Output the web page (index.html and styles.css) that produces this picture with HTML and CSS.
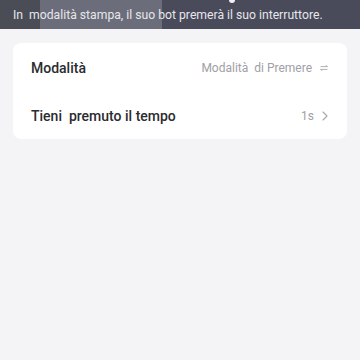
FILE: index.html
```html
<!DOCTYPE html>
<html>
<head>
<meta charset="utf-8">
<link rel="stylesheet" href="styles.css">
</head>
<body>
<div class="banner">
  <div class="seg seg-a"></div>
  <div class="seg seg-b"></div>
  <div class="seg seg-c"></div>
  <span class="dot"></span>
  <p class="banner-text">In&nbsp; modalità stampa, il suo bot premerà il suo interruttore.</p>
</div>
<div class="content">
  <div class="card">
    <div class="row">
      <span class="label">Modalità</span>
      <span class="value">Modalità&nbsp; di Premere
        <svg class="swap" width="8" height="6" viewBox="0 0 8 6"><path d="M0.5 1.6H7.5L5.6 0.2M7.5 4.4H0.5L2.4 5.8" stroke="#a8a8ae" stroke-width="0.9" fill="none" stroke-linejoin="round"/></svg>
      </span>
    </div>
    <div class="row">
      <span class="label">Tieni&nbsp; premuto il tempo</span>
      <span class="value">1s
        <svg class="chev" width="6" height="10" viewBox="0 0 6 10"><path d="M1 1L5 5L1 9" stroke="#a8a8ae" stroke-width="1.1" fill="none" stroke-linecap="round" stroke-linejoin="round"/></svg>
      </span>
    </div>
  </div>
</div>
</body>
</html>
```
FILE: styles.css
```css
* { box-sizing: border-box; }
html, body { margin: 0; padding: 0; }
body {
  width: 360px;
  height: 360px;
  background: #f4f4f6;
  font-family: Roboto, "Liberation Sans", Arial, sans-serif;
  overflow: hidden;
}
.banner {
  position: relative;
  height: 29px;
  display: flex;
  background: #494a5a;
}
.seg { height: 100%; }
.seg-a { width: 40px; background: #4a4d56; }
.seg-b { width: 122px; background: #6c6d7a; }
.seg-c { flex: 1; background: #494a5a; }
.dot {
  position: absolute;
  left: 229px;
  top: -3px;
  width: 6px;
  height: 6px;
  border-radius: 50%;
  background: #f0f0f4;
}
.banner-text {
  position: absolute;
  left: 13px;
  top: 0;
  margin: 0;
  line-height: 30px;
  font-size: 12.2px;
  color: #e6e6ec;
  white-space: nowrap;
}
.content { padding: 14px 13px 0; }
.card {
  background: #ffffff;
  border-radius: 8px;
  padding: 0 18px;
}
.row {
  height: 48px;
  padding-top: 2px;
  display: flex;
  align-items: center;
  justify-content: space-between;
}
.label {
  font-size: 14px;
  font-weight: 500;
  color: #2b2b30;
}
.value {
  display: flex;
  align-items: center;
  gap: 8px;
  font-size: 12px;
  color: #a0a0a6;
  padding-right: 1px;
}
```
